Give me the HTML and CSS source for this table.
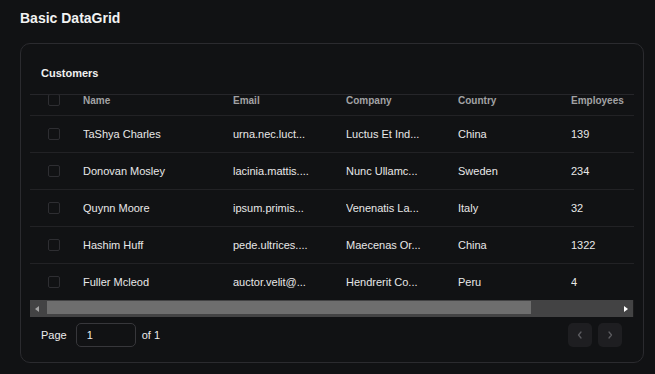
FILE: index.html
```html
<!DOCTYPE html>
<html>
<head>
<meta charset="utf-8">
<link rel="stylesheet" href="styles.css">
</head>
<body>
<div class="page">
  <h1 class="title">Basic DataGrid</h1>
  <div class="card">
    <div class="card-head">Customers</div>
    <div class="grid-viewport">
      <div class="grid">
        <div class="row head">
          <div class="cell chk"><span class="box"></span></div>
          <div class="cell">Name</div>
          <div class="cell">Email</div>
          <div class="cell">Company</div>
          <div class="cell">Country</div>
          <div class="cell">Employees</div>
          <div class="cell"></div>
        </div>
        <div class="row">
          <div class="cell chk"><span class="box"></span></div>
          <div class="cell">TaShya Charles</div>
          <div class="cell">urna.nec.luct...</div>
          <div class="cell">Luctus Et Ind...</div>
          <div class="cell">China</div>
          <div class="cell">139</div>
          <div class="cell"></div>
        </div>
        <div class="row">
          <div class="cell chk"><span class="box"></span></div>
          <div class="cell">Donovan Mosley</div>
          <div class="cell">lacinia.mattis....</div>
          <div class="cell">Nunc Ullamc...</div>
          <div class="cell">Sweden</div>
          <div class="cell">234</div>
          <div class="cell"></div>
        </div>
        <div class="row">
          <div class="cell chk"><span class="box"></span></div>
          <div class="cell">Quynn Moore</div>
          <div class="cell">ipsum.primis...</div>
          <div class="cell">Venenatis La...</div>
          <div class="cell">Italy</div>
          <div class="cell">32</div>
          <div class="cell"></div>
        </div>
        <div class="row">
          <div class="cell chk"><span class="box"></span></div>
          <div class="cell">Hashim Huff</div>
          <div class="cell">pede.ultrices....</div>
          <div class="cell">Maecenas Or...</div>
          <div class="cell">China</div>
          <div class="cell">1322</div>
          <div class="cell"></div>
        </div>
        <div class="row last">
          <div class="cell chk"><span class="box"></span></div>
          <div class="cell">Fuller Mcleod</div>
          <div class="cell">auctor.velit@...</div>
          <div class="cell">Hendrerit Co...</div>
          <div class="cell">Peru</div>
          <div class="cell">4</div>
          <div class="cell"></div>
        </div>
      </div>
    </div>
    <div class="hscroll">
      <div class="sb-btn left"><span class="tri-left"></span></div>
      <div class="sb-track"><div class="sb-thumb"></div></div>
      <div class="sb-btn right"><span class="tri-right"></span></div>
    </div>
    <div class="pager">
      <span class="pg-label">Page</span>
      <div class="pg-input">1</div>
      <span class="pg-label">of 1</span>
      <div class="pg-spacer"></div>
      <button class="pg-btn" aria-label="Previous">
        <svg width="10" height="10" viewBox="0 0 10 10"><polyline points="6,2 3.5,5 6,8" fill="none" stroke="#5c5c60" stroke-width="1.3" stroke-linecap="round" stroke-linejoin="round"/></svg>
      </button>
      <button class="pg-btn" aria-label="Next">
        <svg width="10" height="10" viewBox="0 0 10 10"><polyline points="4,2 6.5,5 4,8" fill="none" stroke="#5c5c60" stroke-width="1.3" stroke-linecap="round" stroke-linejoin="round"/></svg>
      </button>
    </div>
  </div>
</div>
</body>
</html>
```

FILE: styles.css
```css
* { box-sizing: border-box; }
html, body {
  margin: 0;
  background: #111214;
  font-family: "Liberation Sans", Arial, sans-serif;
  color: #ececec;
}
.page {
  padding: 10px 11px 0 20px;
}
.title {
  margin: 0;
  font-size: 14px;
  line-height: 16px;
  font-weight: bold;
  color: #f2f2f2;
}
.card {
  margin-top: 17px;
  width: 624px;
  border: 1px solid #2b2b2f;
  border-radius: 10px;
  padding: 0 9px 15px 9px;
}
.card-head {
  padding: 23px 0 14px 11px;
  font-size: 11px;
  line-height: 13px;
  font-weight: bold;
  color: #f0f0f0;
  border-bottom: 1px solid #26262a;
}
.grid-viewport {
  width: 604px;
  overflow: hidden;
}
.grid {
  width: 710px;
}
.row {
  display: grid;
  grid-template-columns: 53px 150px 113px 112px 113px 113px 56px;
  height: 37px;
  align-items: center;
  border-bottom: 1px solid #222225;
  font-size: 11px;
  line-height: 13px;
  color: #e8e8e8;
}
.row.head {
  height: 21px;
  align-items: start;
  font-size: 10px;
  font-weight: bold;
  line-height: 11px;
  color: #a2a2a4;
}
.row.last {
  border-bottom: none;
  height: 36px;
}
.cell {
  white-space: nowrap;
  overflow: hidden;
}
.chk {
  padding-left: 18px;
  display: flex;
  align-items: center;
}
.box {
  display: block;
  width: 12px;
  height: 12px;
  border: 1px solid #2e2e32;
  border-radius: 2px;
}
.row.head .box {
  margin-top: -1px;
}
.hscroll {
  display: flex;
  height: 17px;
  width: 604px;
  background: #434344;
}
.sb-btn {
  width: 16px;
  flex: none;
  display: flex;
  align-items: center;
  justify-content: center;
}
.sb-track {
  flex: 1;
  display: flex;
  align-items: flex-start;
}
.sb-thumb {
  height: 13px;
  width: 484px;
  margin: 1px 0 0 1px;
  background: #6e6e6e;
}
.tri-left {
  width: 0;
  height: 0;
  border-top: 3.5px solid transparent;
  border-bottom: 3.5px solid transparent;
  border-right: 4px solid #a3a3a3;
  margin-left: -3px;
}
.tri-right {
  width: 0;
  height: 0;
  border-top: 3.5px solid transparent;
  border-bottom: 3.5px solid transparent;
  border-left: 4px solid #ffffff;
}
.sb-btn.right {
  border-right: 1px solid #1a1a1b;
}
.pager {
  display: flex;
  align-items: center;
  margin-top: 6px;
  padding: 0 12px 0 11px;
  height: 24px;
}
.pg-label {
  font-size: 11px;
  color: #ececec;
}
.pg-input {
  width: 60px;
  height: 24px;
  margin: 0 6px 0 9px;
  border: 1px solid #37373b;
  border-radius: 5px;
  padding-left: 10px;
  font-size: 11px;
  line-height: 22px;
  color: #ececec;
}
.pg-spacer { flex: 1; }
.pg-btn {
  width: 24px;
  height: 24px;
  margin-left: 6px;
  padding: 0;
  border: none;
  border-radius: 5px;
  background: #1e1e21;
  display: flex;
  align-items: center;
  justify-content: center;
}
.pg-btn svg { display: block; }
```
